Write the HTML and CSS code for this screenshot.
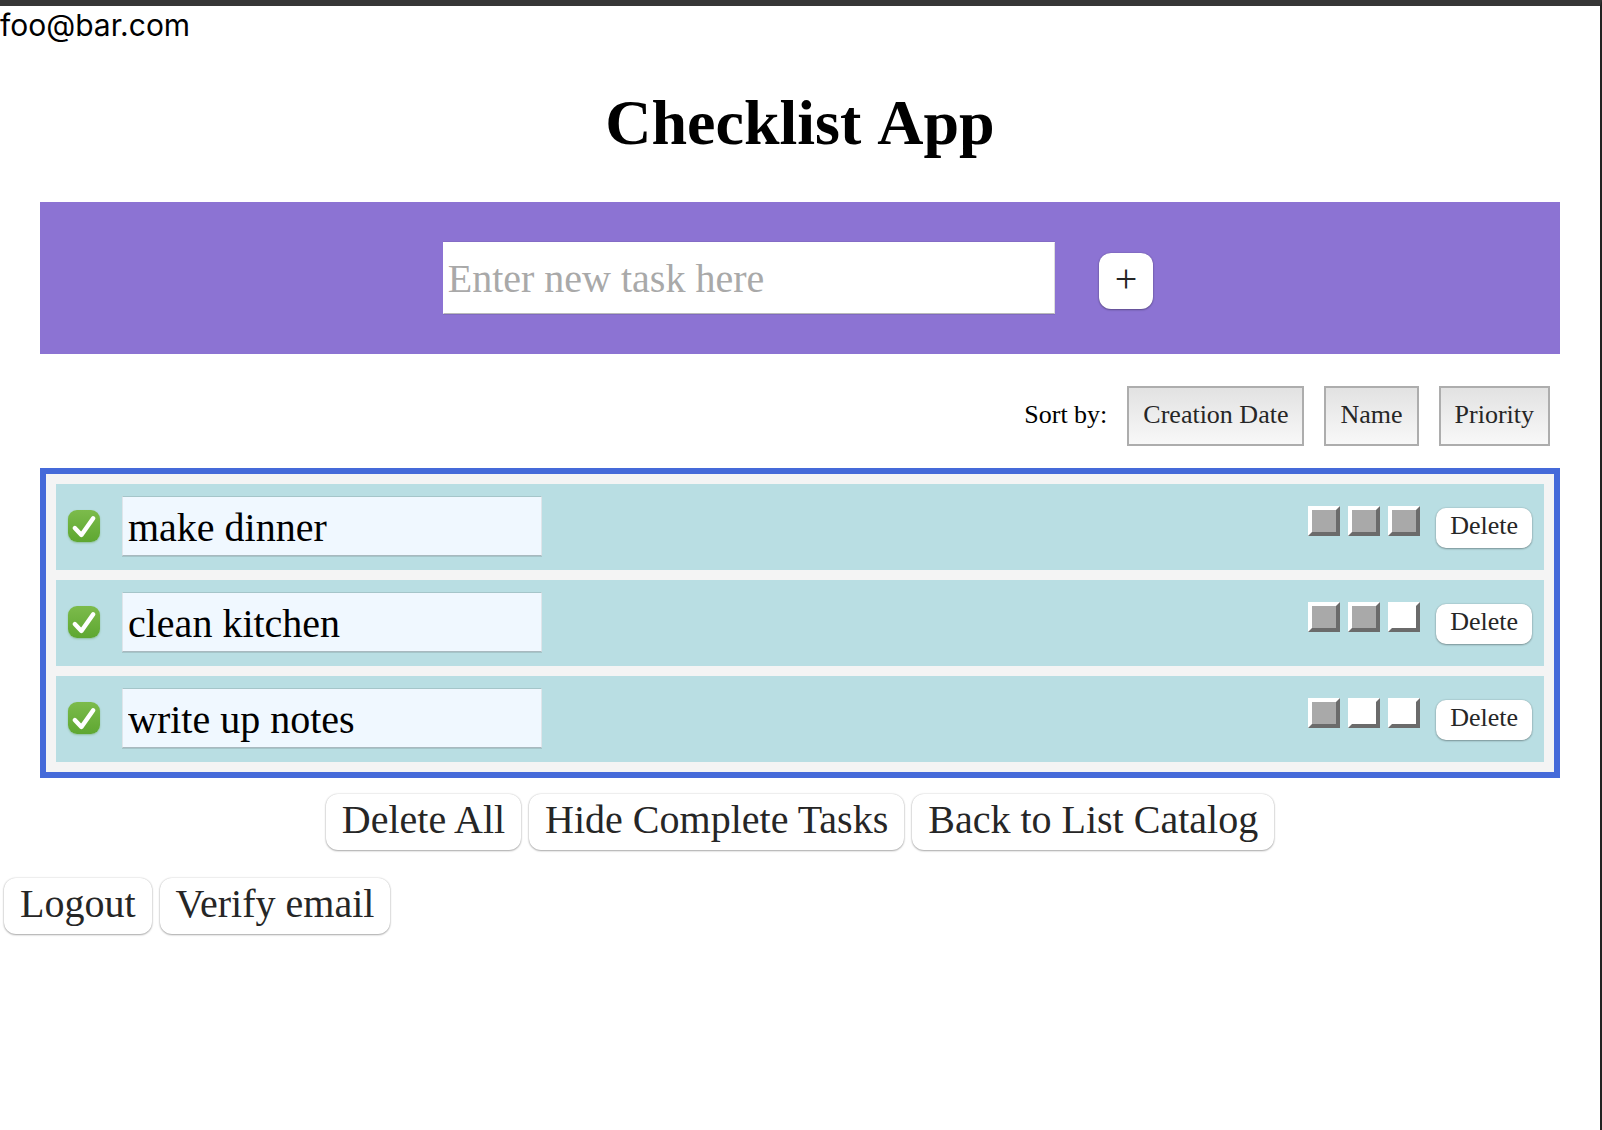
FILE: index.html
```html
<!DOCTYPE html>
<html lang="en">
<head>
  <meta charset="utf-8">
  <meta name="viewport" content="width=device-width, initial-scale=1">
  <title>Checklist App</title>
  <link rel="stylesheet" href="styles.css">
</head>
<body>
  <div class="account">foo@bar.com</div>
  <main class="app">
    <h1 class="title">Checklist App</h1>

    <form class="new-task">
      <input class="field new-task-field" type="text" placeholder="Enter new task here" aria-label="New task">
      <button class="btn" type="button" aria-label="Add task">+</button>
    </form>

    <div class="sort">
      <span>Sort by:</span>
      <button class="sort-btn" type="button">Creation Date</button>
      <button class="sort-btn" type="button">Name</button>
      <button class="sort-btn" type="button">Priority</button>
    </div>

    <ul class="tasks">
      <li class="task">
        <input class="check" type="checkbox" checked aria-label="make dinner done">
        <input class="field task-field" type="text" value="make dinner" aria-label="Task name">
        <div class="actions">
          <button class="level on" type="button" aria-label="Priority 1"></button>
          <button class="level on" type="button" aria-label="Priority 2"></button>
          <button class="level on" type="button" aria-label="Priority 3"></button>
          <button class="btn btn-small" type="button">Delete</button>
        </div>
      </li>
      <li class="task">
        <input class="check" type="checkbox" checked aria-label="clean kitchen done">
        <input class="field task-field" type="text" value="clean kitchen" aria-label="Task name">
        <div class="actions">
          <button class="level on" type="button" aria-label="Priority 1"></button>
          <button class="level on" type="button" aria-label="Priority 2"></button>
          <button class="level" type="button" aria-label="Priority 3"></button>
          <button class="btn btn-small" type="button">Delete</button>
        </div>
      </li>
      <li class="task">
        <input class="check" type="checkbox" checked aria-label="write up notes done">
        <input class="field task-field" type="text" value="write up notes" aria-label="Task name">
        <div class="actions">
          <button class="level on" type="button" aria-label="Priority 1"></button>
          <button class="level" type="button" aria-label="Priority 2"></button>
          <button class="level" type="button" aria-label="Priority 3"></button>
          <button class="btn btn-small" type="button">Delete</button>
        </div>
      </li>
    </ul>

    <div class="list-actions">
      <button class="btn" type="button">Delete All</button>
      <button class="btn" type="button">Hide Complete Tasks</button>
      <button class="btn" type="button">Back to List Catalog</button>
    </div>
  </main>

  <footer class="session">
    <button class="btn" type="button">Logout</button>
    <button class="btn" type="button">Verify email</button>
  </footer>
</body>
</html>
```

FILE: styles.css
```css
* {
  box-sizing: border-box;
}

body {
  margin: 0;
  min-height: 100vh;
  border-top: 6px solid #363636;
  border-right: 2px solid #222;
  background: #fff;
  color: #000;
  font-family: "Liberation Serif", "Times New Roman", serif;
}

button,
input {
  margin: 0;
  font-family: inherit;
}

.account {
  font: 30px/38px Inter, sans-serif;
}

.app {
  padding: 0 40px;
}

.title {
  margin: 43px 0;
  font-size: 64px;
  font-kerning: none;
  line-height: 72px;
  text-align: center;
}

/* Text fields */
.field {
  border: 1px solid;
  border-radius: 0;
  color: #000;
  font-size: 40px;
  line-height: 44px;
}

.field::placeholder {
  color: #a9a9a9;
  opacity: 1;
}

.new-task {
  display: flex;
  align-items: baseline;
  justify-content: center;
  gap: 40px;
  padding: 40px;
  background: #8c73d3;
}

.new-task-field {
  width: 612px;
  height: 72px;
  padding: 13px 5px 13px 4px;
  border-color: #fff #ddd #b9b9b9 #fff;
  background: #fff;
  box-shadow: 0 -1px #846cc6, 0 1px #7f6abf;
}

/* Rounded buttons */
.btn {
  margin: 0 4px;
  padding: 4px 16px 8px;
  border: 0;
  border-radius: 12px;
  background: #fff;
  box-shadow: 0 0 2px rgba(0, 0, 0, 0.2), 0 1px 2px rgba(0, 0, 0, 0.3);
  color: #262626;
  font-size: 40px;
  line-height: 44px;
}

.btn-small {
  margin: 2px 0 0 8px;
  padding: 4px 14px 8px;
  border-radius: 10px;
  font-size: 26px;
  line-height: 28px;
}

.sort {
  display: flex;
  align-items: baseline;
  justify-content: flex-end;
  gap: 20px;
  padding: 32px 10px 22px;
  font-size: 26px;
  line-height: 28px;
}

.sort-btn {
  padding: 13px 14px 15px;
  border: 2px solid #adadad;
  background: linear-gradient(#e2e2e2, #f8f8f8);
  color: #262626;
  font-size: 26px;
  line-height: 28px;
}

/* Task list */
.tasks {
  display: grid;
  gap: 10px;
  margin: 0;
  padding: 10px;
  border: 6px solid #456ad9;
  background: #f4f4f4;
  list-style: none;
}

.task {
  display: flex;
  align-items: center;
  padding: 12px 12px 14px;
  background: #b9dee3;
}

.check {
  flex: none;
  width: 32px;
  height: 32px;
  margin-right: 22px;
  appearance: none;
  border-radius: 9px;
  background: linear-gradient(#7cbb4b, #5ea731);
  box-shadow: 0 1px 2px rgba(80, 150, 50, 0.4);
}

.check:checked {
  background: url("data:image/svg+xml,%3Csvg xmlns='http://www.w3.org/2000/svg' viewBox='0 0 32 32'%3E%3Cpath d='M6.8 18 13.4 25 25.2 8.2' fill='none' stroke='white' stroke-width='4.4' stroke-linecap='round' stroke-linejoin='round'/%3E%3C/svg%3E"), linear-gradient(#7cbb4b, #5ea731);
}

.task-field {
  width: 420px;
  height: 60px;
  padding: 8px 5px 6px;
  border-color: #a5c5c9 #dfe5ea #a9b9bf;
  background: #f0f8ff;
  box-shadow: 0 1px #a5c5c9;
}

.actions {
  display: flex;
  align-self: flex-start;
  align-items: flex-start;
  gap: 8px;
  margin-left: auto;
  padding-top: 10px;
}

.level {
  width: 32px;
  height: 30px;
  padding: 0;
  border: 4px solid;
  border-color: #fff #6b6b6b #6b6b6b #fff;
  background: #fff;
}

.level.on {
  background: #a9a9a9;
}

.list-actions {
  display: flex;
  justify-content: center;
  padding: 16px 0 28px;
}

.session {
  display: flex;
}
```
